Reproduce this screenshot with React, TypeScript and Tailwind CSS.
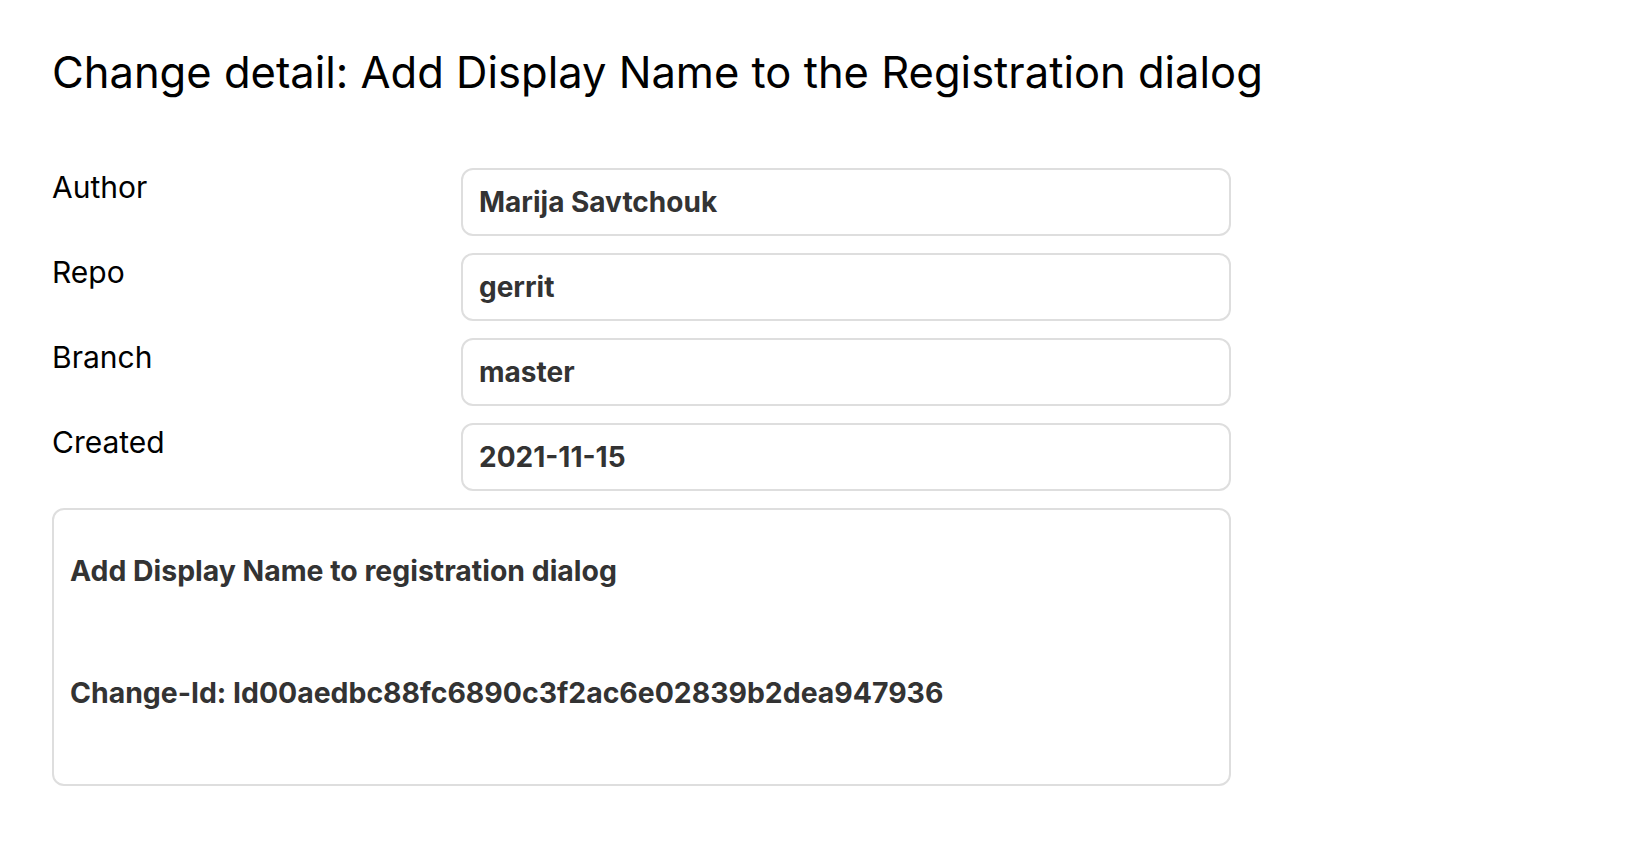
const fields = [
  { label: 'Author', value: 'Marija Savtchouk' },
  { label: 'Repo', value: 'gerrit' },
  { label: 'Branch', value: 'master' },
  { label: 'Created', value: '2021-11-15' },
];

export default function App() {
  return (
    <div className="min-h-screen bg-white pl-[52px] pt-[43px] font-['Inter',sans-serif]">
      <h1 className="text-[43.5px] leading-[58px] font-normal text-black">
        Change detail: Add Display Name to the Registration dialog
      </h1>

      <div className="mt-[67px] w-[1179px]">
        <div className="flex flex-col gap-[17px]">
          {fields.map(f => (
            <div key={f.label} className="grid grid-cols-[409px_1fr]">
              <div className="text-[30px] leading-[38px] text-black">{f.label}</div>
              <div className="h-[68px] flex items-center rounded-[12px] border-2 border-[#dedede] px-[16px] text-[28px] font-bold text-[#333]">
                {f.value}
              </div>
            </div>
          ))}
        </div>

        <div className="mt-[17px] h-[278px] rounded-[12px] border-2 border-[#dedede] px-[16px] pt-[41px] text-[28.4px] font-bold text-[#333]">
          <p className="leading-[40px]">Add Display Name to registration dialog</p>
          <p className="mt-[82px] leading-[40px]">Change-Id: Id00aedbc88fc6890c3f2ac6e02839b2dea947936</p>
        </div>
      </div>
    </div>
  );
}
